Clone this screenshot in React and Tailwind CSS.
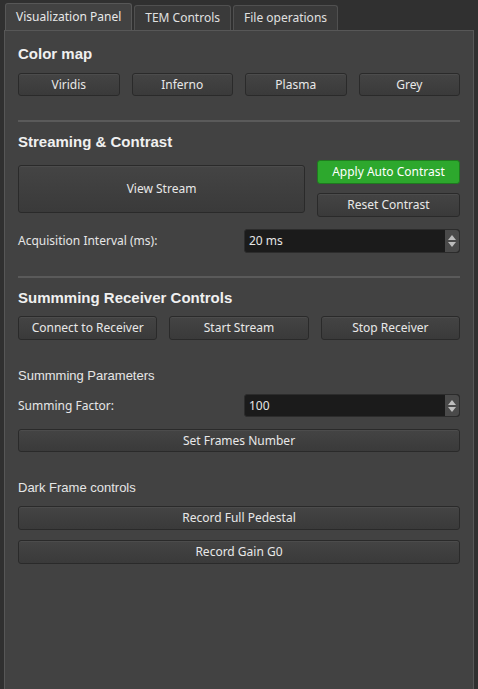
const btn =
  'flex items-center justify-center rounded-[3px] border border-[#2a2a2a] bg-gradient-to-b from-[#444444] to-[#3a3a3a] text-[12px] leading-none text-[#e8e8e8] shadow-[inset_0_1px_0_#4c4c4c]';

function Button({ children, className = '' }) {
  return <button className={`${btn} ${className}`}>{children}</button>;
}

function SpinBox({ value, h = 'h-[24px]' }) {
  return (
    <div className={`flex ${h} w-[216px] rounded-[3px] border border-[#2c2c2c] bg-[#1b1b1b]`}>
      <span className="flex flex-1 items-center pl-[4px] text-[12px] text-[#e6e6e6]">{value}</span>
      <div className="flex w-[14px] flex-col items-center justify-center rounded-r-[3px] bg-[#4a4a4a] text-[#bdbdbd]">
        <svg width="8" height="5" viewBox="0 0 8 5"><path d="M0 5 L4 0 L8 5 Z" fill="currentColor" /></svg>
        <div className="h-[2px]" />
        <svg width="8" height="5" viewBox="0 0 8 5"><path d="M0 0 L4 5 L8 0 Z" fill="currentColor" /></svg>
      </div>
    </div>
  );
}

function Heading({ children, className = '' }) {
  return (
    <h2
      className={`text-[15px] font-bold leading-[18px] text-[#f0f0f0] ${className}`}
      style={{ fontFamily: '"Liberation Sans", Arial, sans-serif' }}
    >
      {children}
    </h2>
  );
}

function Separator({ className = '' }) {
  return <div className={`h-[2px] bg-[#5a5a5a] ${className}`} />;
}

export default function App() {
  const tabs = ['Visualization Panel', 'TEM Controls', 'File operations'];
  return (
    <div className="h-[689px] w-[478px] overflow-hidden bg-[#303030] pt-[3px]" style={{ fontFamily: '"Noto Sans", "Open Sans", sans-serif' }}>
      <div className="flex pl-[5px]">
        {tabs.map((t, i) => (
          <div
            key={t}
            className={
              i === 0
                ? 'relative z-10 -mb-px flex h-[27px] items-center rounded-t-[3px] border border-b-0 border-[#575757] bg-[#424242] px-[10px] text-[12px] text-[#e8e8e8]'
                : 'ml-[2px] mt-[2px] flex h-[25px] items-center rounded-t-[3px] border border-b-0 border-[#505050] bg-[#3a3a3a] px-[10px] text-[12px] text-[#e0e0e0]'
            }
          >
            {t}
          </div>
        ))}
      </div>
      <div className="mx-[4px] h-[700px] border border-[#575757] bg-[#424242] px-[13px] pt-[14px]">
        <Heading>Color map</Heading>
        <div className="mt-[10px] grid grid-cols-4 gap-[12px]">
          {['Viridis', 'Inferno', 'Plasma', 'Grey'].map((c) => (
            <Button key={c} className="h-[23px]">{c}</Button>
          ))}
        </div>

        <Separator className="mt-[24px]" />

        <Heading className="mt-[11px]">Streaming &amp; Contrast</Heading>
        <div className="mt-[9px] flex gap-[12px]">
          <Button className="mt-[5px] h-[48px] flex-1">View Stream</Button>
          <div className="flex w-[143px] flex-col gap-[9px]">
            <button className="flex h-[24px] items-center justify-center rounded-[3px] border border-[#1f7a1f] bg-[#2da82d] text-[12px] leading-none text-white">
              Apply Auto Contrast
            </button>
            <Button className="h-[24px]">Reset Contrast</Button>
          </div>
        </div>
        <div className="mt-[12px] flex items-center justify-between">
          <span className="text-[12px] text-[#e6e6e6]">Acquisition Interval (ms):</span>
          <SpinBox value="20 ms" />
        </div>

        <Separator className="mt-[23px]" />

        <Heading className="mt-[11px]">Summming Receiver Controls</Heading>
        <div className="mt-[9px] grid grid-cols-3 gap-[12px]">
          {['Connect to Receiver', 'Start Stream', 'Stop Receiver'].map((c) => (
            <Button key={c} className="h-[24px]">{c}</Button>
          ))}
        </div>

        <div className="mt-[28px] text-[13px] leading-[16px] text-[#e6e6e6]" style={{ fontFamily: '"Liberation Sans", Arial, sans-serif' }}>
          Summming Parameters
        </div>
        <div className="mt-[10px] flex items-center justify-between">
          <span className="text-[12px] text-[#e6e6e6]">Summing Factor:</span>
          <SpinBox value="100" h="h-[23px]" />
        </div>
        <Button className="mt-[12px] h-[23px] w-full">Set Frames Number</Button>

        <div className="mt-[28px] text-[13px] leading-[16px] text-[#e6e6e6]" style={{ fontFamily: '"Liberation Sans", Arial, sans-serif' }}>
          Dark Frame controls
        </div>
        <Button className="mt-[10px] h-[24px] w-full">Record Full Pedestal</Button>
        <Button className="mt-[10px] h-[24px] w-full">Record Gain G0</Button>
      </div>
    </div>
  );
}
